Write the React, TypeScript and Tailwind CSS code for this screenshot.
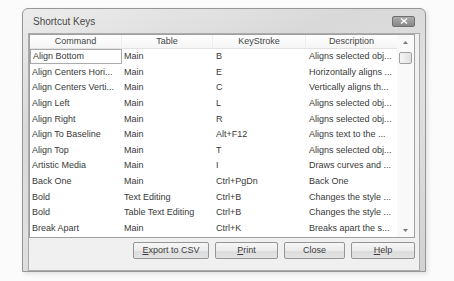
const rows = [
  ["Align Bottom", "Main", "B", "Aligns selected obj..."],
  ["Align Centers Hori...", "Main", "E", "Horizontally aligns ..."],
  ["Align Centers Verti...", "Main", "C", "Vertically aligns th..."],
  ["Align Left", "Main", "L", "Aligns selected obj..."],
  ["Align Right", "Main", "R", "Aligns selected obj..."],
  ["Align To Baseline", "Main", "Alt+F12", "Aligns text to the ..."],
  ["Align Top", "Main", "T", "Aligns selected obj..."],
  ["Artistic Media", "Main", "I", "Draws curves and ..."],
  ["Back One", "Main", "Ctrl+PgDn", "Back One"],
  ["Bold", "Text Editing", "Ctrl+B", "Changes the style ..."],
  ["Bold", "Table Text Editing", "Ctrl+B", "Changes the style ..."],
  ["Break Apart", "Main", "Ctrl+K", "Breaks apart the s..."],
];

function DialogButton({ w, children }: { w: string; children: React.ReactNode }) {
  return (
    <button
      className={`${w} flex h-[17px] items-center justify-center rounded-[2px] border border-[#959595] bg-[linear-gradient(#f7f7f7,#ebebeb_50%,#dcdcdc_51%,#e3e3e3)] text-[9px] text-[#3c3c3c]`}
    >
      {children}
    </button>
  );
}

export default function App() {
  return (
    <div className="h-[281px] w-[454px] bg-[#fbfbfb] pl-[22px] pt-[8px] font-['Liberation_Sans',Arial,sans-serif]">
      <div className="flex h-[264px] w-[404px] flex-col rounded-t-[6px] border border-[#979797] bg-[linear-gradient(160deg,#ececec,#d9d9d9_30%,#e0e0e0_55%,#d2d2d2)] shadow-[2px_2px_4px_rgba(0,0,0,0.1)]">
        {/* title bar */}
        <div className="flex h-[24px] items-center justify-between pl-[10px] pr-[10px]">
          <span className="text-[10px] text-[#4a4a4a]">Shortcut Keys</span>
          <div className="flex h-[11px] w-[23px] items-center justify-center rounded-[2px] border border-[#707070] bg-[linear-gradient(#ababab,#888888)]">
            <svg width="8" height="6" viewBox="0 0 8 6">
              <path d="M1 0.5 L7 5.5 M7 0.5 L1 5.5" stroke="#fff" strokeWidth="1.4" />
            </svg>
          </div>
        </div>

        {/* client area */}
        <div className="mx-[5px] flex flex-1 flex-col border border-[#ababab] bg-[#f0f0f0] pb-[4px]">
          <div className="flex h-[204px] w-[386px] border border-[#a0a0a0] bg-white">
            <div className="flex w-[367px] flex-col">
              {/* header */}
              <div className="flex h-[14px] border-b border-[#e2e2e2] bg-[linear-gradient(#ffffff,#f5f5f5)] text-[9px] text-[#444]">
                <div className="flex w-[92px] items-center justify-center border-r border-[#efefef]">Command</div>
                <div className="flex w-[91px] items-center justify-center border-r border-[#efefef]">Table</div>
                <div className="flex w-[93px] items-center justify-center border-r border-[#efefef]">KeyStroke</div>
                <div className="flex w-[91px] items-center justify-center">Description</div>
              </div>
              {rows.map((r, i) => (
                <div key={i} className="flex h-[15.6px] text-[9px] leading-none text-[#3a3a3a]">
                  <div
                    className={`flex w-[92px] items-center whitespace-nowrap pl-[2px] ${
                      i === 0 ? "mb-[1px] border border-[#ababab] pl-[1px]" : ""
                    }`}
                  >
                    {r[0]}
                  </div>
                  <div className="flex w-[91px] items-center whitespace-nowrap pl-[2px]">{r[1]}</div>
                  <div className="flex w-[93px] items-center whitespace-nowrap pl-[3px]">{r[2]}</div>
                  <div className="flex w-[91px] items-center whitespace-nowrap pl-[3px]">{r[3]}</div>
                </div>
              ))}
            </div>
            {/* scrollbar */}
            <div className="flex w-[17px] flex-col items-center bg-[#f9f9f9]">
              <div className="flex h-[14px] items-center justify-center">
                <svg width="5" height="3" viewBox="0 0 5 3">
                  <path d="M0 3 L2.5 0 L5 3 Z" fill="#7a7a7a" />
                </svg>
              </div>
              <div className="mt-[3px] h-[12px] w-[13px] rounded-[2px] border border-[#a0a0a0] bg-[linear-gradient(90deg,#f6f6f6,#e0e0e0)]" />
              <div className="flex-1" />
              <div className="flex h-[14px] items-center justify-center">
                <svg width="5" height="3" viewBox="0 0 5 3">
                  <path d="M0 0 L2.5 3 L5 0 Z" fill="#7a7a7a" />
                </svg>
              </div>
            </div>
          </div>

          <div className="mt-[4px] flex gap-[6px] pl-[104px]">
            <DialogButton w="w-[76px]">
              <span>
                <span className="underline">E</span>xport to CSV
              </span>
            </DialogButton>
            <DialogButton w="w-[63px]">
              <span>
                <span className="underline">P</span>rint
              </span>
            </DialogButton>
            <DialogButton w="w-[61px]">Close</DialogButton>
            <DialogButton w="w-[64px]">
              <span>
                <span className="underline">H</span>elp
              </span>
            </DialogButton>
          </div>
        </div>
      </div>
    </div>
  );
}
